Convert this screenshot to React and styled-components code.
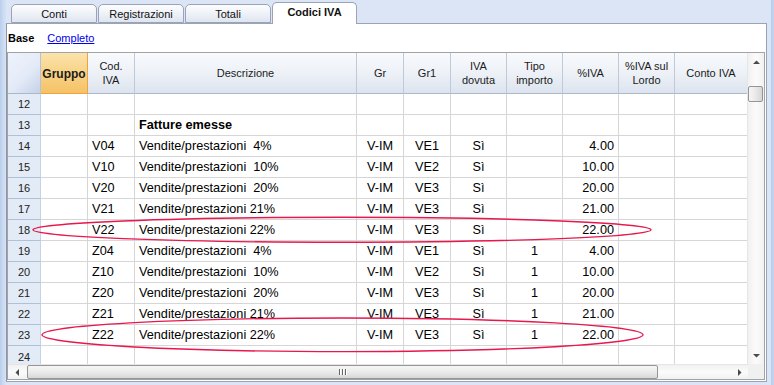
import React from "react";
import styled, { createGlobalStyle } from "styled-components";

const GlobalStyle = createGlobalStyle`
  html, body {
    margin: 0;
    padding: 0;
    background: #dbe5f5;
  }
  body {
    font-family: "Liberation Sans", Arial, sans-serif;
  }
`;

const uiFont = `"Liberation Sans", Arial, sans-serif`;

const columns = [
  { key: "gruppo", title: "Gruppo", width: 47, align: "left", accent: true },
  { key: "cod", title: "Cod.\nIVA", width: 47, align: "left" },
  { key: "desc", title: "Descrizione", width: 222, align: "left" },
  { key: "gr", title: "Gr", width: 47, align: "center" },
  { key: "gr1", title: "Gr1", width: 47, align: "center" },
  { key: "dov", title: "IVA\ndovuta", width: 56, align: "center" },
  { key: "tipo", title: "Tipo\nimporto", width: 56, align: "center" },
  { key: "pct", title: "%IVA", width: 56, align: "right" },
  { key: "lordo", title: "%IVA sul\nLordo", width: 56, align: "right" },
  { key: "conto", title: "Conto IVA", width: 73, align: "left" },
];

const vat = (cod, desc, gr1, pct, tipo = "") => ({
  cod, desc, gr: "V-IM", gr1, dov: "Sì", tipo, pct,
});

const rows = [
  { n: 12 },
  { n: 13, desc: "Fatture emesse", bold: true },
  { n: 14, ...vat("V04", "Vendite/prestazioni  4%", "VE1", "4.00") },
  { n: 15, ...vat("V10", "Vendite/prestazioni  10%", "VE2", "10.00") },
  { n: 16, ...vat("V20", "Vendite/prestazioni  20%", "VE3", "20.00") },
  { n: 17, ...vat("V21", "Vendite/prestazioni 21%", "VE3", "21.00") },
  { n: 18, ...vat("V22", "Vendite/prestazioni 22%", "VE3", "22.00") },
  { n: 19, ...vat("Z04", "Vendite/prestazioni  4%", "VE1", "4.00", "1") },
  { n: 20, ...vat("Z10", "Vendite/prestazioni  10%", "VE2", "10.00", "1") },
  { n: 21, ...vat("Z20", "Vendite/prestazioni  20%", "VE3", "20.00", "1") },
  { n: 22, ...vat("Z21", "Vendite/prestazioni 21%", "VE3", "21.00", "1") },
  { n: 23, ...vat("Z22", "Vendite/prestazioni 22%", "VE3", "22.00", "1") },
  { n: 24, partial: true },
];

const template = `33px ${columns.map(c => c.width + "px").join(" ")}`;

const Screen = styled.div`
  position: relative;
  width: 774px;
  height: 385px;
  overflow: hidden;
  display: flex;
  background: #dbe5f5;
`;

const LeftEdge = styled.div`
  width: 6px;
  background: linear-gradient(90deg, #b9cdea 0, #c9daf2 3px, #d6e2f5 6px);
`;

const RightEdge = styled.div`
  width: 7px;
  background: linear-gradient(90deg, #dbe5f5 0, #dbe5f5 4px, #b8cdea 4px, #c4d6ef 7px);
`;

const Main = styled.div`
  width: 761px;
  display: flex;
  flex-direction: column;
  padding-bottom: 3px;
`;

const TabBar = styled.div`
  height: 23px;
  display: flex;
  align-items: flex-end;
  padding-left: 5px;
  position: relative;
  z-index: 1;
`;

const Tab = styled.div`
  box-sizing: border-box;
  width: ${p => (p.$active ? 85 : 86)}px;
  height: ${p => (p.$active ? 22 : 19)}px;
  margin-left: ${p => (p.$active ? 1 : 0)}px;
  margin-bottom: ${p => (p.$active ? -1 : 0)}px;
  border: 1px solid #9aa4b6;
  border-bottom: ${p => (p.$active ? "none" : "1px solid #9aa4b6")};
  border-radius: 5px 5px 0 0;
  background: ${p =>
    p.$active
      ? "linear-gradient(#ffffff, #ffffff)"
      : "linear-gradient(#fdfdfe, #eef2f8 50%, #dfe5ef)"};
  display: flex;
  align-items: center;
  justify-content: center;
  padding-bottom: ${p => (p.$active ? 3 : 0)}px;
  font: ${p => (p.$active ? "bold" : "normal")} 11px ${uiFont};
  color: #111;
  & + & {
    margin-left: ${p => (p.$active ? 1 : -1)}px;
  }
`;

const Panel = styled.div`
  flex: 1;
  display: flex;
  flex-direction: column;
  background: #fff;
  border: 1px solid #9aa4b6;
  border-left-color: #8d97a8;
  padding: 0 1px 1px 0;
`;

const ViewBar = styled.div`
  height: 27px;
  display: flex;
  align-items: center;
  gap: 13px;
  padding-left: 1px;
  padding-bottom: 1px;
  font: 11px ${uiFont};
`;

const ViewActive = styled.span`
  font-weight: bold;
  color: #000;
`;

const ViewLink = styled.span`
  color: #0000ee;
  text-decoration: underline;
`;

const GridBox = styled.div`
  flex: 1;
  display: flex;
  flex-direction: column;
  border: 1px solid #a3a3a3;
`;

const GridMain = styled.div`
  display: flex;
  height: 311px;
`;

const Table = styled.div`
  width: 740px;
  overflow: hidden;
  display: grid;
  grid-template-columns: ${template};
  grid-auto-rows: 21px;
  grid-template-rows: 41px;
  align-content: start;
`;

const Corner = styled.div`
  box-sizing: border-box;
  background: linear-gradient(135deg, #eef3fc 0, #e4ebf8 55%, #c3d1e7 100%);
  border-right: 1px solid #b4c3d8;
  border-bottom: 1px solid #a9b8cc;
`;

const HeadCell = styled.div`
  box-sizing: border-box;
  display: flex;
  align-items: center;
  justify-content: center;
  text-align: center;
  white-space: pre;
  line-height: 14px;
  padding-top: ${p => (p.$accent ? 2 : 0)}px;
  font: ${p => (p.$accent ? "bold 12px" : "11px")} ${uiFont};
  line-height: 14px;
  color: #1b1b1b;
  background: ${p =>
    p.$accent
      ? "linear-gradient(#fbe3ab, #f8d48a 45%, #f5c266)"
      : "linear-gradient(#f8fafd, #edf1f7 50%, #dde4ee)"};
  border-right: 1px solid ${p => (p.$accent ? "#f0a33c" : "#bccadb")};
  border-bottom: 1px solid ${p => (p.$accent ? "#f0a33c" : "#a9b8cc")};
`;

const RowNum = styled.div`
  box-sizing: border-box;
  display: flex;
  align-items: center;
  justify-content: center;
  padding-top: ${p => (p.$partial ? 2 : 0)}px;
  font: 11px ${uiFont};
  color: #222;
  background: #e3ebf6;
  border-right: 1px solid #c6d3e5;
  border-bottom: 1px solid #aec1da;
`;

const Cell = styled.div`
  box-sizing: border-box;
  display: flex;
  align-items: center;
  justify-content: ${p =>
    p.$align === "right" ? "flex-end" : p.$align === "center" ? "center" : "flex-start"};
  padding: 0 4px 0 ${p => (p.$align === "left" ? 4 : 0)}px;
  padding-right: ${p => (p.$align === "right" ? 4 : 0)}px;
  white-space: pre;
  overflow: hidden;
  font: ${p => (p.$bold ? "bold" : "normal")} 12.7px ${uiFont};
  color: #000;
  border-right: 1px solid #d6d6d6;
  border-bottom: 1px solid #d6d6d6;
`;

const VScroll = styled.div`
  width: 16px;
  display: flex;
  flex-direction: column;
  background: linear-gradient(90deg, #f1f1f1, #fbfbfb 50%, #f1f1f1);
  border-left: 1px solid #e6e6e6;
`;

const ArrowBox = styled.div`
  box-sizing: border-box;
  width: ${p => p.$w || 16}px;
  height: ${p => p.$h || 17}px;
  display: flex;
  align-items: center;
  justify-content: center;
  flex-shrink: 0;
`;

const VTrack = styled.div`
  flex: 1;
  padding-top: 16px;
`;

const VThumb = styled.div`
  box-sizing: border-box;
  margin-left: 0px;
  width: 15px;
  height: 16px;
  border: 1px solid #959595;
  border-radius: 2px;
  background: linear-gradient(90deg, #f6f6f6, #e9e9e9 50%, #d6d6d6);
`;

const HScrollRow = styled.div`
  display: flex;
  height: 15px;
`;

const HScroll = styled.div`
  width: 740px;
  display: flex;
  align-items: center;
  background: linear-gradient(#f1f1f1, #fbfbfb 50%, #f1f1f1);
  border-top: 1px solid #e6e6e6;
`;

const HThumb = styled.div`
  box-sizing: border-box;
  width: 631px;
  height: 14px;
  margin-left: 2px;
  border: 1px solid #959595;
  border-radius: 2px;
  background: linear-gradient(#f6f6f6, #ebebeb 50%, #d8d8d8);
  display: flex;
  align-items: center;
  justify-content: center;
  gap: 2px;
`;

const Grip = styled.span`
  width: 1px;
  height: 6px;
  background: #666;
  box-shadow: 1px 0 0 #fff;
`;

const HSpacer = styled.div`
  flex: 1;
`;

const ScrollCorner = styled.div`
  width: 16px;
  background: #f0f0f0;
`;

const Annotations = styled.svg`
  position: absolute;
  left: 0;
  top: 0;
  pointer-events: none;
`;

const Arrow = ({ dir }) => {
  const pts = {
    up: "0,4 3.5,0.5 7,4",
    down: "0,0 7,0 3.5,3.5",
    left: "4,0 4,7 0.5,3.5",
    right: "0,0 0,7 3.5,3.5",
  }[dir];
  const vertical = dir === "up" || dir === "down";
  return (
    <svg width={vertical ? 7 : 4} height={vertical ? 4 : 7}>
      <polygon points={pts} fill="#4a4a4a" />
    </svg>
  );
};

export default function App() {
  return (
    <>
      <GlobalStyle />
      <Screen>
        <LeftEdge />
        <Main>
          <TabBar>
            <Tab>Conti</Tab>
            <Tab>Registrazioni</Tab>
            <Tab>Totali</Tab>
            <Tab $active>Codici IVA</Tab>
          </TabBar>
          <Panel>
            <ViewBar>
              <ViewActive>Base</ViewActive>
              <ViewLink>Completo</ViewLink>
            </ViewBar>
            <GridBox>
              <GridMain>
                <Table>
                  <Corner />
                  {columns.map(c => (
                    <HeadCell key={c.key} $accent={c.accent}>{c.title}</HeadCell>
                  ))}
                  {rows.map(r => (
                    <React.Fragment key={r.n}>
                      <RowNum $partial={r.partial}>{r.n}</RowNum>
                      {columns.map(c => (
                        <Cell key={c.key} $align={c.align} $bold={r.bold}>
                          {r[c.key] || ""}
                        </Cell>
                      ))}
                    </React.Fragment>
                  ))}
                </Table>
                <VScroll>
                  <ArrowBox><Arrow dir="up" /></ArrowBox>
                  <VTrack><VThumb /></VTrack>
                  <ArrowBox><Arrow dir="down" /></ArrowBox>
                </VScroll>
              </GridMain>
              <HScrollRow>
                <HScroll>
                  <ArrowBox $w={17} $h={15}><Arrow dir="left" /></ArrowBox>
                  <HThumb>
                    <Grip /><Grip /><Grip />
                  </HThumb>
                  <HSpacer />
                  <ArrowBox $w={17} $h={15}><Arrow dir="right" /></ArrowBox>
                </HScroll>
                <ScrollCorner />
              </HScrollRow>
            </GridBox>
          </Panel>
        </Main>
        <RightEdge />
        <Annotations width="774" height="385">
          <ellipse cx="342" cy="229.8" rx="309" ry="12.5" fill="none" stroke="#e8174c" strokeWidth="1.4" />
          <ellipse cx="342.5" cy="334.8" rx="300.5" ry="16.8" fill="none" stroke="#e8174c" strokeWidth="1.4" />
        </Annotations>
      </Screen>
    </>
  );
}
